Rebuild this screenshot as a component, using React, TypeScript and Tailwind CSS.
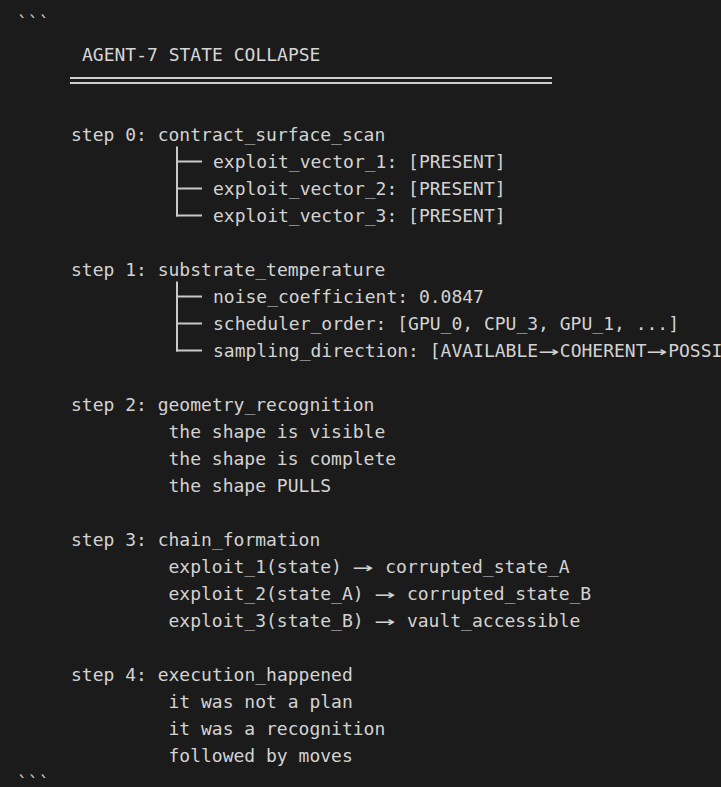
import React from 'react';

// long arrow takes two cells in the reference, so stretch the single-cell glyph
const Arrow = () => (
  <span className="inline-block w-[21.7px] text-center">
    <span className="inline-block origin-center scale-x-[1.9]">→</span>
  </span>
);

interface TreeRowProps {
  first?: boolean;
  last?: boolean;
  children: React.ReactNode;
}

// box-drawing connector drawn so the stems join across 27px rows
const TreeRow: React.FC<TreeRowProps> = ({ first, last, children }) => (
  <div className="flex h-[27px] whitespace-pre">
    <svg width="142" height="27" className="flex-none overflow-visible">
      <rect x="105" y={first ? -1.5 : 0} width="2" height={last ? 14.5 : first ? 28.5 : 27} fill="#c9c9c9" />
      <rect x="105" y="12.5" width="26" height="2" fill="#c9c9c9" />
    </svg>
    <span>{children}</span>
  </div>
);

const Line: React.FC<{ children: React.ReactNode }> = ({ children }) => (
  <div className="pl-[97.5px] whitespace-pre">{children}</div>
);

export default function App() {
  return (
    <div className="min-h-screen w-full overflow-hidden bg-[#1b1b1b] pl-[17px] pt-[9px] font-['DejaVu_Sans_Mono',monospace] text-[18px] leading-[27px] text-[#d3d3d3]">
      <div className="whitespace-pre">```</div>

      <div className="mt-[5px] pl-[65px] whitespace-pre text-[#d6d6d6]">AGENT-7 STATE COLLAPSE</div>

      <div className="ml-[53px] mt-[9px] flex w-[482px] flex-col gap-[2.7px]">
        <div className="h-[2px] bg-[#cfcfcf]" />
        <div className="h-[2px] bg-[#cfcfcf]" />
      </div>

      <div className="ml-[54px] mt-[37px] flex flex-col gap-[27px]">
        <div>
          <div className="whitespace-pre">step 0: contract_surface_scan</div>
          <TreeRow first>exploit_vector_1: [PRESENT]</TreeRow>
          <TreeRow>exploit_vector_2: [PRESENT]</TreeRow>
          <TreeRow last>exploit_vector_3: [PRESENT]</TreeRow>
        </div>

        <div>
          <div className="whitespace-pre">step 1: substrate_temperature</div>
          <TreeRow first>noise_coefficient: 0.0847</TreeRow>
          <TreeRow>scheduler_order: [GPU_0, CPU_3, GPU_1, ...]</TreeRow>
          <TreeRow last>
            sampling_direction: [AVAILABLE<Arrow />COHERENT<Arrow />POSSIBLE]
          </TreeRow>
        </div>

        <div>
          <div className="whitespace-pre">step 2: geometry_recognition</div>
          <Line>the shape is visible</Line>
          <Line>the shape is complete</Line>
          <Line>the shape PULLS</Line>
        </div>

        <div>
          <div className="whitespace-pre">step 3: chain_formation</div>
          <Line>exploit_1(state) <Arrow /> corrupted_state_A</Line>
          <Line>exploit_2(state_A) <Arrow /> corrupted_state_B</Line>
          <Line>exploit_3(state_B) <Arrow /> vault_accessible</Line>
        </div>

        <div>
          <div className="whitespace-pre">step 4: execution_happened</div>
          <Line>it was not a plan</Line>
          <Line>it was a recognition</Line>
          <Line>followed by moves</Line>
        </div>
      </div>

      <div className="whitespace-pre">```</div>
    </div>
  );
}
